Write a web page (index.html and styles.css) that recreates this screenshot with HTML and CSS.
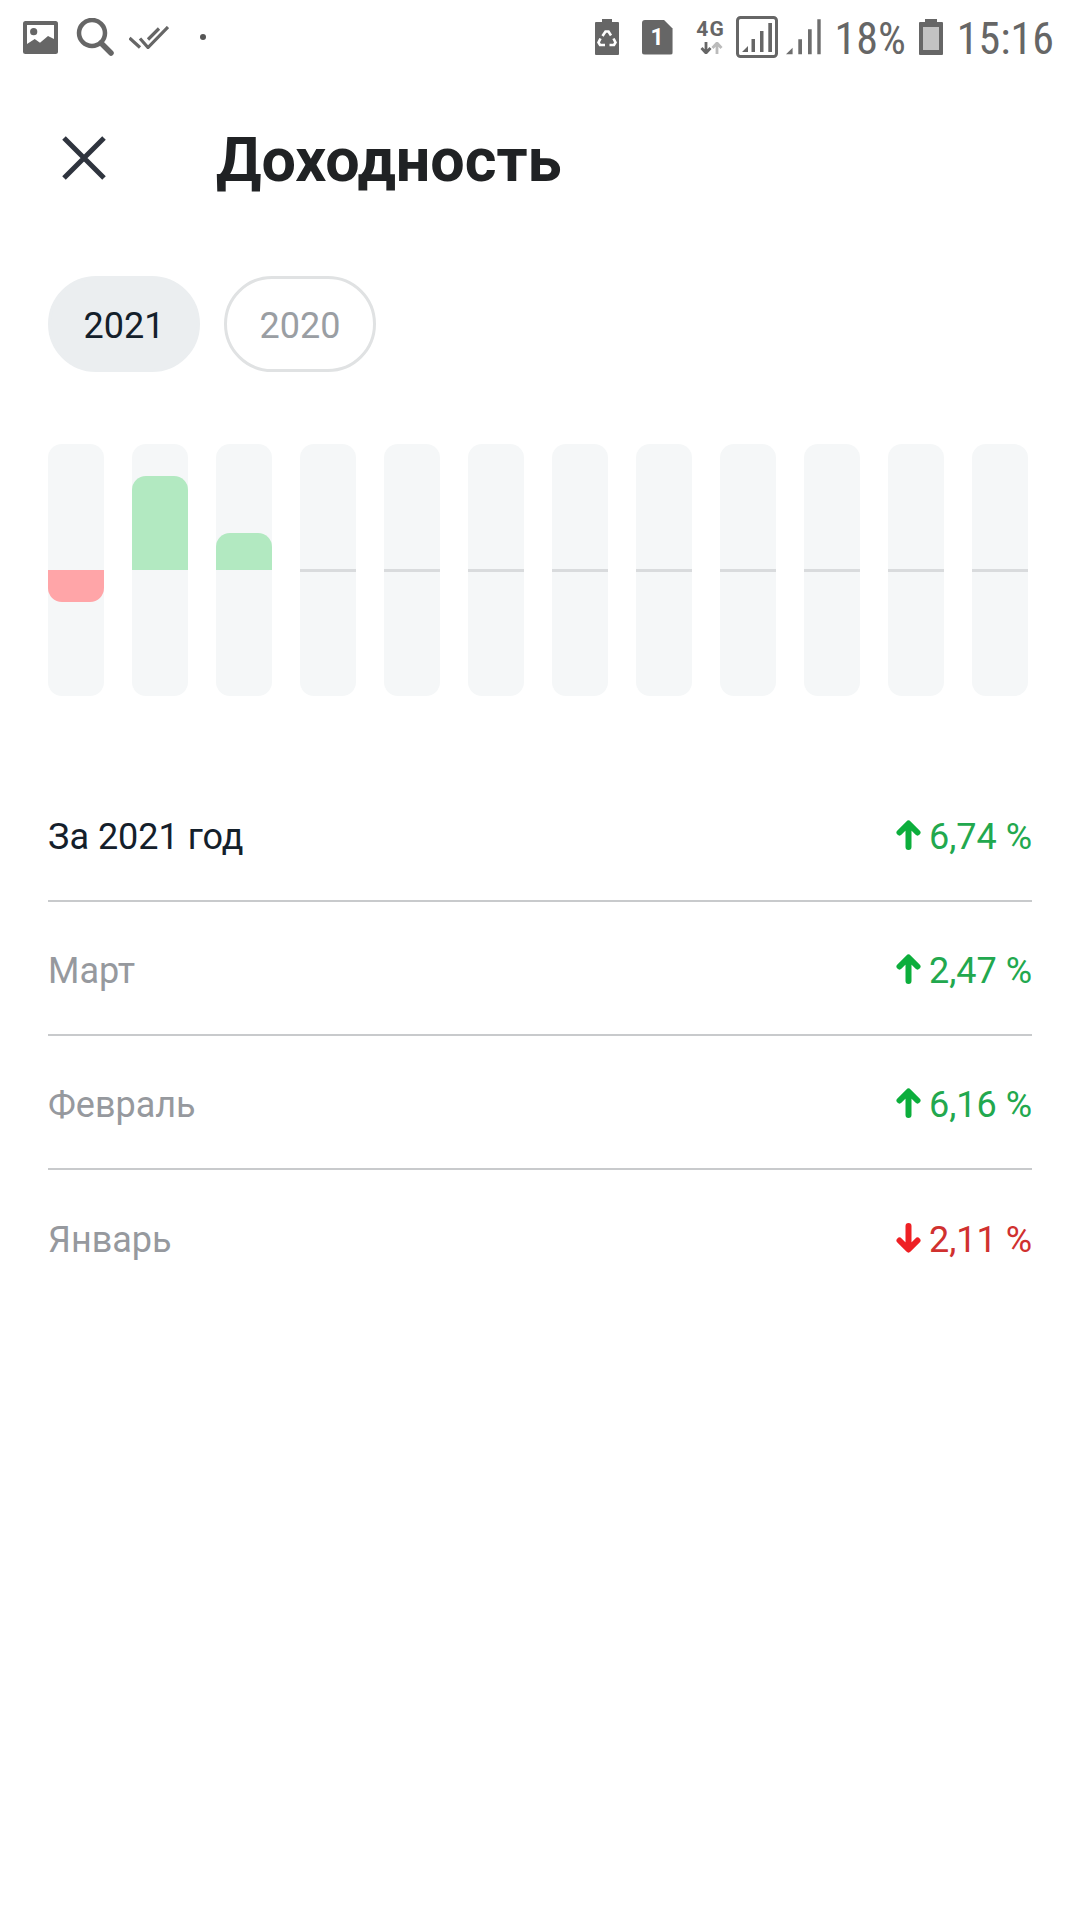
FILE: index.html
```html
<!DOCTYPE html>
<html lang="ru">
<head>
  <meta charset="UTF-8" />
  <title>Доходность</title>
  <link rel="stylesheet" href="styles.css">
</head>
<body>
  <div class="status-bar">
    <div class="status-left">
      <svg class="ic-image" width="35" height="33" viewBox="0 0 35 33"><rect width="35" height="33" rx="2.5" fill="#666"/><path fill="#fff" d="M4 4h27v14l-6-3-8 6.700-5.300-3.700L4 23z"/><circle cx="10.700" cy="10.700" r="3.600" fill="#666"/></svg>
      <svg class="ic-search" width="38" height="38" viewBox="0 0 38 38"><circle cx="16" cy="15" r="13" fill="none" stroke="#666" stroke-width="4.500"/><path d="M25 25l10 10" stroke="#666" stroke-width="5.500" stroke-linecap="round"/></svg>
      <svg class="ic-checks" width="40" height="23" viewBox="0 0 40 23"><path d="M0.500 12l10.500 9.500M11 12.500l8 9L39 1M19 13.500L30 2.500" fill="none" stroke="#666" stroke-width="3.200"/></svg>
      <span class="dot"></span>
    </div>
    <div class="status-right">
      <svg class="ic-recycle" width="24" height="36" viewBox="0 0 24 36"><path fill="#666" d="M7 0h10v3h6a1 1 0 0 1 1 1v31a1 1 0 0 1-1 1H1a1 1 0 0 1-1-1V4a1 1 0 0 1 1-1h6z"/><path fill="none" stroke="#fff" stroke-width="2.600" d="M7.500 17l3-4.500h3l2.500 4M18.500 19.500l2 4-1.500 2.500h-4.500M10 26H5l-1.500-2.500 2-4"/></svg>
      <div class="sim">1</div>
      <div class="net">
        <span>4G</span>
        <svg width="24" height="12" viewBox="0 0 24 12"><path d="M7 0v9M2.500 6l4.500 5 4.500-5" fill="none" stroke="#666" stroke-width="2.800"/><path d="M18 12V3M13.500 6L18 1l4.500 5" fill="none" stroke="#bbb" stroke-width="2.800"/></svg>
      </div>
      <svg class="ic-box" width="42" height="42" viewBox="0 0 42 42"><rect x="1.500" y="1.500" width="39" height="39" rx="3" fill="none" stroke="#666" stroke-width="3"/><path fill="#666" d="M6 36l6-6v6zM15.500 23H19v13h-3.500zM24 15h3.500v21H24zM32.300 7H36v29h-3.700z"/></svg>
      <svg class="ic-signal" width="36" height="36" viewBox="0 0 36 36"><path fill="#6e6e6e" d="M1 35.300l6.600-6.600v6.600zM13.300 20.300H17v15h-3.700zM23 10.300h3.700v25H23zM32.300.3h3.400v35h-3.400z"/></svg>
      <span class="status-text pct">18%</span>
      <svg class="ic-battery" width="24" height="36" viewBox="0 0 24 36"><path fill="#666" d="M6 0h12v3h5a1 1 0 0 1 1 1v31a1 1 0 0 1-1 1H1a1 1 0 0 1-1-1V4a1 1 0 0 1 1-1h5z"/><rect x="4" y="8" width="16" height="23" fill="#c2c2c2"/></svg>
      <span class="status-text clock">15:16</span>
    </div>
  </div>

  <header class="title-bar">
    <svg class="close-icon" width="46" height="46" viewBox="0 0 46 46"><path d="M3 3l40 40M43 3L3 43" stroke="#2f343e" stroke-width="5" fill="none"/></svg>
    <h1>Доходность</h1>
  </header>

  <div class="years">
    <button class="year active">2021</button>
    <button class="year">2020</button>
  </div>

  <div class="chart">
    <div class="col"><div class="bar neg" style="height:32px"></div></div>
    <div class="col"><div class="bar pos" style="height:94px"></div></div>
    <div class="col"><div class="bar pos" style="height:37px"></div></div>
    <div class="col"><div class="zero"></div></div>
    <div class="col"><div class="zero"></div></div>
    <div class="col"><div class="zero"></div></div>
    <div class="col"><div class="zero"></div></div>
    <div class="col"><div class="zero"></div></div>
    <div class="col"><div class="zero"></div></div>
    <div class="col"><div class="zero"></div></div>
    <div class="col"><div class="zero"></div></div>
    <div class="col"><div class="zero"></div></div>
  </div>

  <div class="rows">
    <div class="row total">
      <span>За 2021 год</span>
      <span class="val up"><svg width="25" height="30" viewBox="0 0 25 30"><path d="M12.500 27V4M3.500 12.500l9-9 9 9" fill="none" stroke="currentColor" stroke-width="6" stroke-linecap="round" stroke-linejoin="round"/></svg><span class="num">6,74 %</span></span>
    </div>
    <div class="row">
      <span>Март</span>
      <span class="val up"><svg width="25" height="30" viewBox="0 0 25 30"><path d="M12.500 27V4M3.500 12.500l9-9 9 9" fill="none" stroke="currentColor" stroke-width="6" stroke-linecap="round" stroke-linejoin="round"/></svg><span class="num">2,47 %</span></span>
    </div>
    <div class="row">
      <span>Февраль</span>
      <span class="val up"><svg width="25" height="30" viewBox="0 0 25 30"><path d="M12.500 27V4M3.500 12.500l9-9 9 9" fill="none" stroke="currentColor" stroke-width="6" stroke-linecap="round" stroke-linejoin="round"/></svg><span class="num">6,16 %</span></span>
    </div>
    <div class="row last">
      <span>Январь</span>
      <span class="val down"><svg width="25" height="30" viewBox="0 0 25 30"><path d="M12.500 3v23M3.500 17.500l9 9 9-9" fill="none" stroke="currentColor" stroke-width="6" stroke-linecap="round" stroke-linejoin="round"/></svg><span class="num">2,11 %</span></span>
    </div>
  </div>
</body>
</html>
```

FILE: styles.css
```css
* {
  margin: 0;
  padding: 0;
  box-sizing: border-box;
}
body {
  width: 1080px;
  height: 1920px;
  background: #fff;
  font-family: Roboto, sans-serif;
  overflow: hidden;
}

/* Status bar */
.status-bar {
  height: 74px;
  padding: 0 26px 0 23px;
  display: flex;
  justify-content: space-between;
  align-items: center;
}
.status-left, .status-right {
  display: flex;
  align-items: center;
}
.ic-search { margin-left: 18px; }
.ic-checks { margin-left: 15px; }
.dot {
  width: 6px;
  height: 6px;
  border-radius: 50%;
  background: #555;
  margin-left: 31px;
}
/* SIM card with its top right corner cut off */
.sim {
  width: 31px;
  height: 35px;
  margin-left: 23px;
  background: #666;
  border-radius: 3px;
  clip-path: polygon(0 0, 71% 0, 100% 26%, 100% 100%, 0 100%);
  color: #fff;
  font-size: 23px;
  font-weight: 700;
  line-height: 36px;
  text-align: center;
}
.net {
  width: 28px;
  margin-left: 24px;
  display: flex;
  flex-direction: column;
  align-items: center;
  gap: 4px;
  color: #666;
  font-size: 21px;
  font-weight: 700;
  line-height: 18px;
  letter-spacing: 1px;
}
.ic-box { margin-left: 11px; }
.ic-signal { margin-left: 7px; }
.status-text {
  padding-top: 4px;
  color: #666;
  font-size: 44px;
  font-stretch: condensed;
}
.pct { margin-left: 14px; }
.ic-battery { margin-left: 13px; }
.clock { margin-left: 14px; }

/* Title */
.title-bar {
  height: 168px;
  padding: 0 61px;
  display: flex;
  align-items: center;
  gap: 109px;
}
h1 {
  margin-top: 4px;
  font-size: 61px;
  font-weight: 700;
  color: #202224;
}

/* Year filter */
.years {
  margin-top: 34px;
  padding: 0 48px;
  display: flex;
  gap: 24px;
}
.year {
  width: 152px;
  height: 96px;
  padding-top: 3px;
  border-radius: 48px;
  border: 3px solid #e0e2e3;
  background: #fff;
  color: #9a9ea3;
  font: 36px Roboto, sans-serif;
}
.year.active {
  background: #ebeef0;
  border-color: #ebeef0;
  color: #14202b;
}

/* Monthly chart */
.chart {
  margin-top: 72px;
  padding: 0 48px;
  display: flex;
  gap: 28px;
}
.col {
  width: 56px;
  height: 252px;
  border-radius: 14px;
  background: #f5f7f8;
  position: relative;
}
.bar, .zero {
  position: absolute;
  left: 0;
  right: 0;
}
.zero {
  top: 125px;
  height: 3px;
  background: #d9dbdd;
}
.bar.pos {
  bottom: 126px;
  background: #b2e9c1;
  border-radius: 14px 14px 0 0;
}
.bar.neg {
  top: 126px;
  background: #ffa5a8;
  border-radius: 0 0 14px 14px;
}

/* Results list */
.rows {
  margin-top: 72px;
  padding: 0 48px;
}
.row {
  height: 134px;
  padding-top: 6px;
  display: flex;
  justify-content: space-between;
  align-items: center;
  border-bottom: 2px solid #c8cacc;
  font-size: 36px;
  color: #96999e;
}
.row.total {
  color: #14202b;
}
.row.last {
  border-bottom: none;
}
.val {
  display: flex;
  align-items: center;
  gap: 8px;
}
.val svg {
  margin-top: -4px;
}
.up {
  color: #0cae3c;
}
.up .num {
  color: #22a84e;
}
.down {
  color: #ee2024;
}
.down .num {
  color: #d0312f;
}
```
